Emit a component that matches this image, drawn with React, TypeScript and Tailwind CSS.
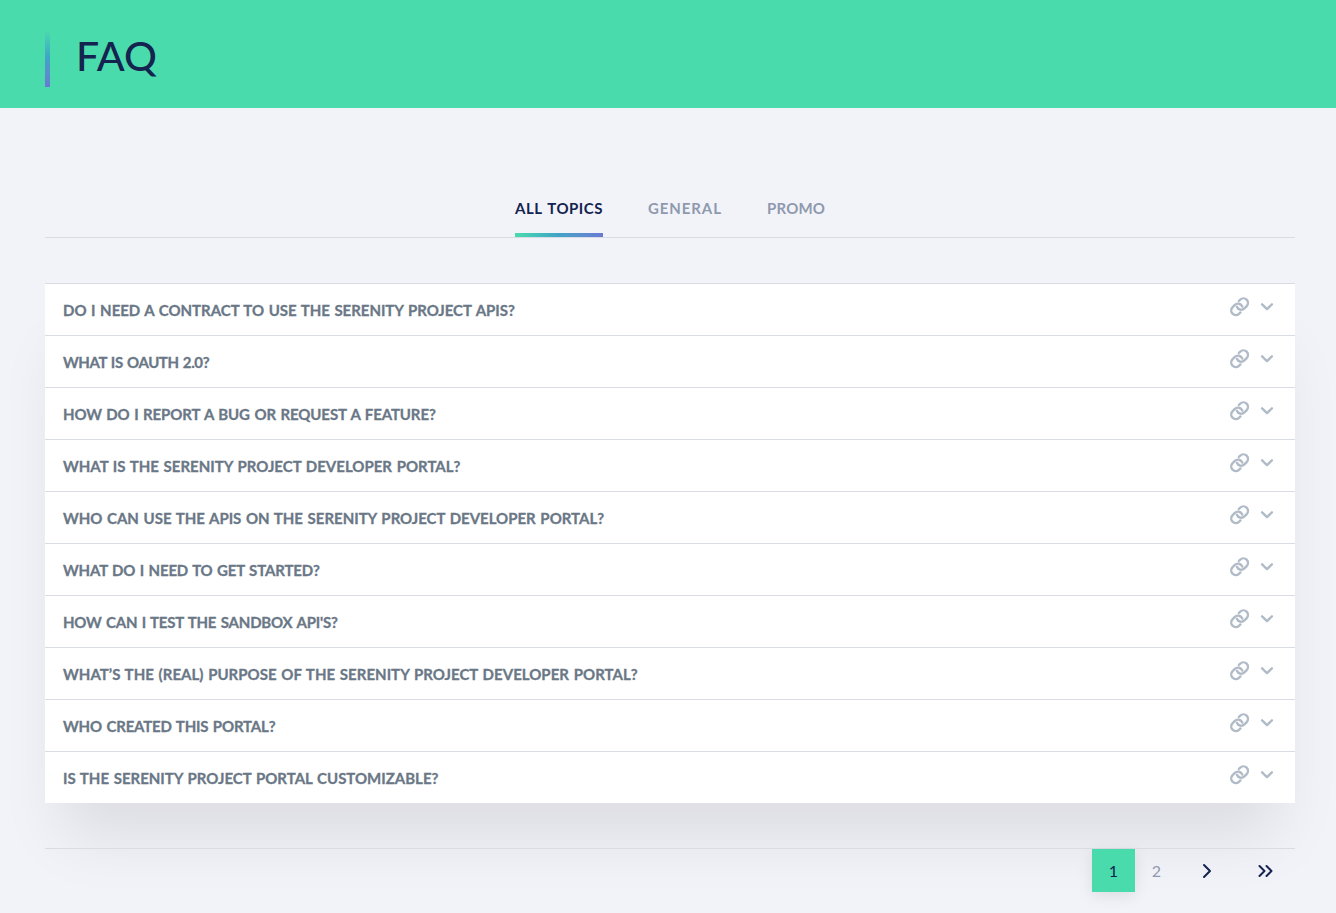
const tabs = [
  { label: "ALL TOPICS", active: true, style: "w-[88px] tracking-[0.5px] [word-spacing:1.5px]" },
  { label: "GENERAL", active: false, style: "w-[74px] tracking-[0.9px]" },
  { label: "PROMO", active: false, style: "w-[58px] tracking-[0.2px]" },
];

const questions = [
  { text: "DO I NEED A CONTRACT TO USE THE SERENITY PROJECT APIS?", tracking: "tracking-[-0.03px]" },
  { text: "WHAT IS OAUTH 2.0?", tracking: "tracking-[-0.4px]" },
  { text: "HOW DO I REPORT A BUG OR REQUEST A FEATURE?", tracking: "tracking-[-0.11px]" },
  { text: "WHAT IS THE SERENITY PROJECT DEVELOPER PORTAL?", tracking: "tracking-[0px]" },
  { text: "WHO CAN USE THE APIS ON THE SERENITY PROJECT DEVELOPER PORTAL?", tracking: "tracking-[-0.01px]" },
  { text: "WHAT DO I NEED TO GET STARTED?", tracking: "tracking-[-0.16px]" },
  { text: "HOW CAN I TEST THE SANDBOX API'S?", tracking: "tracking-[-0.19px]" },
  { text: "WHAT’S THE (REAL) PURPOSE OF THE SERENITY PROJECT DEVELOPER PORTAL?", tracking: "tracking-[0.03px]" },
  { text: "WHO CREATED THIS PORTAL?", tracking: "tracking-[-0.17px]" },
  { text: "IS THE SERENITY PROJECT PORTAL CUSTOMIZABLE?", tracking: "tracking-[0px]" },
];

function LinkIcon() {
  return (
    <svg width="20" height="20" viewBox="0 0 20 20" fill="none" stroke="currentColor" strokeWidth="2.4" strokeLinecap="round" strokeLinejoin="round">
      <g transform="translate(-.4 -.3)">
        <path d="M7.3 10.1a4.6 4.6 0 0 0 7.45 1.65l2.4-2.4a4.6 4.6 0 0 0-6.5-6.5L9.2 4.3" />
        <path d="M12.7 9.9a4.6 4.6 0 0 0-7.45-1.65l-2.4 2.4a4.6 4.6 0 0 0 6.5 6.5L10.8 15.7" />
      </g>
    </svg>
  );
}

function ChevronDown() {
  return (
    <svg width="14" height="10" viewBox="0 0 14 10" fill="none" stroke="currentColor" strokeWidth="2.4" strokeLinecap="round" strokeLinejoin="round">
      <path d="M2.1 2.3 7 7.1l4.9-4.8" />
    </svg>
  );
}

export default function App() {
  return (
    <div className="h-[913px] overflow-hidden bg-[#f2f3f9] font-['Lato',sans-serif] text-[#14234f]">
      <header className="flex h-[108px] items-start bg-[#4adbac] pt-[30px] pl-[45px]">
        <div className="h-[57px] w-[5px] bg-linear-to-b from-[#4adbac] via-[#40a3c6] to-[#6979d5]" />
        <h1 className="ml-[26px] pt-px text-[41px] leading-[50px] font-medium">FAQ</h1>
      </header>

      <main className="px-[45px] pt-[75px] pr-[41px]">
        <nav className="flex h-[55px] justify-center gap-[45px] border-b border-[#dadce5]">
          {tabs.map((t) => (
            <button
              key={t.label}
              className={`flex flex-col justify-between whitespace-nowrap text-left text-[15px] leading-[20px] font-bold pt-[15px] ${t.style} ${t.active ? "text-[#14234f]" : "text-[#8f99ad]"}`}
            >
              {t.label}
              {t.active && <span className="block h-1 w-full bg-linear-to-r from-[#4adbac] via-[#40a3c6] to-[#6979d5]" />}
            </button>
          ))}
        </nav>

        <ul className="mt-[45px] bg-white shadow-[0_50px_60px_-18px_rgba(0,0,0,0.095)]">
          {questions.map((q) => (
            <li key={q.text} className="flex h-[52px] items-start border-t border-[#d9dce5] pr-[21px] pl-[18px] text-[#b1bbc7]">
              <h2 className={`flex-1 whitespace-nowrap pt-4 text-[15px] leading-[20px] font-bold text-[#6a7786] [-webkit-text-stroke:0.3px_#6a7786] [word-spacing:1px] ${q.tracking}`}>
                {q.text}
              </h2>
              <span className="mt-[13px] mr-[10px]"><LinkIcon /></span>
              <span className="mt-[18px]"><ChevronDown /></span>
            </li>
          ))}
        </ul>

        <nav className="mt-[45px] flex justify-end border-t border-[#dadce3] text-[16px]">
          <button className="h-[43px] w-[43px] bg-[#4adbac] shadow-[0_4px_16px_rgba(0,0,0,0.09)]">1</button>
          <button className="h-[43px] w-[43px] text-[#8f99ad]">2</button>
          <button className="flex h-[43px] w-[58px] items-center justify-center">
            <svg width="10" height="16" viewBox="0 0 10 16" fill="none" stroke="currentColor" strokeWidth="2" strokeLinecap="round" strokeLinejoin="round">
              <path d="m2 2 6 6-6 6" />
            </svg>
          </button>
          <button className="flex h-[43px] w-[59px] items-center justify-center">
            <svg width="16" height="16" viewBox="0 0 16 16" fill="none" stroke="currentColor" strokeWidth="2" strokeLinecap="round" strokeLinejoin="round">
              <path d="m1.5 3 5 5-5 5M8.5 3l5 5-5 5" />
            </svg>
          </button>
        </nav>
      </main>
    </div>
  );
}
